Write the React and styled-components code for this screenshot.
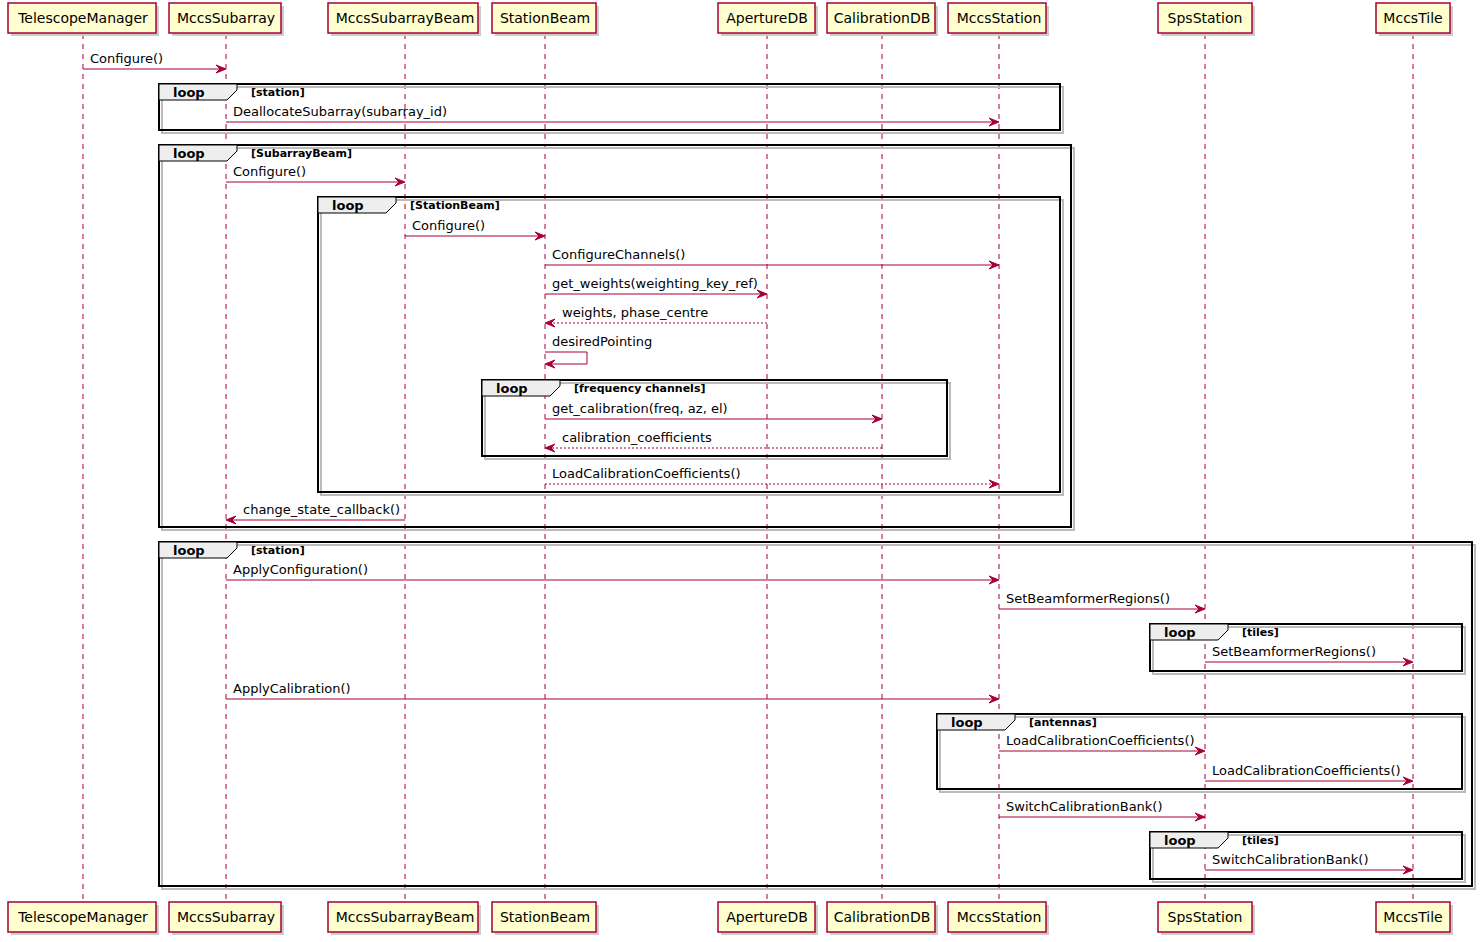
import React from 'react';
import styled, { createGlobalStyle } from 'styled-components';

const Global = createGlobalStyle`
  body { margin: 0; background: #fff; font-family: "DejaVu Sans", sans-serif; }
`;

const Canvas = styled.svg`
  display: block;
  width: 1482px;
  height: 942px;
  font-family: "DejaVu Sans", sans-serif;
`;

const RED = '#A80036';

const participants = [
  { name: 'TelescopeManager', x: 8, w: 148, cx: 83 },
  { name: 'MccsSubarray', x: 169, w: 112, cx: 226 },
  { name: 'MccsSubarrayBeam', x: 328, w: 150, cx: 405 },
  { name: 'StationBeam', x: 492, w: 104, cx: 545 },
  { name: 'ApertureDB', x: 718, w: 97, cx: 767 },
  { name: 'CalibrationDB', x: 827, w: 108, cx: 882 },
  { name: 'MccsStation', x: 948, w: 98, cx: 999 },
  { name: 'SpsStation', x: 1158, w: 94, cx: 1205 },
  { name: 'MccsTile', x: 1376, w: 74, cx: 1413 },
];
const P = Object.fromEntries(participants.map((p) => [p.name, p.cx]));

const loops = [
  { x: 159, y: 84, w: 901, h: 46, cond: '[station]' },
  { x: 159, y: 145, w: 912, h: 382, cond: '[SubarrayBeam]' },
  { x: 318, y: 197, w: 742, h: 295, cond: '[StationBeam]' },
  { x: 482, y: 380, w: 465, h: 76, cond: '[frequency channels]' },
  { x: 159, y: 542, w: 1313, h: 344, cond: '[station]' },
  { x: 1150, y: 624, w: 312, h: 47, cond: '[tiles]' },
  { x: 937, y: 714, w: 525, h: 75, cond: '[antennas]' },
  { x: 1150, y: 832, w: 312, h: 47, cond: '[tiles]' },
];

const msgs = [
  ['TelescopeManager', 'MccsSubarray', 69, 'Configure()'],
  ['MccsSubarray', 'MccsStation', 122, 'DeallocateSubarray(subarray_id)'],
  ['MccsSubarray', 'MccsSubarrayBeam', 182, 'Configure()'],
  ['MccsSubarrayBeam', 'StationBeam', 236, 'Configure()'],
  ['StationBeam', 'MccsStation', 265, 'ConfigureChannels()'],
  ['StationBeam', 'ApertureDB', 294, 'get_weights(weighting_key_ref)'],
  ['ApertureDB', 'StationBeam', 323, 'weights, phase_centre', true],
  ['StationBeam', 'CalibrationDB', 419, 'get_calibration(freq, az, el)'],
  ['CalibrationDB', 'StationBeam', 448, 'calibration_coefficients', true],
  ['StationBeam', 'MccsStation', 484, 'LoadCalibrationCoefficients()', true],
  ['MccsSubarrayBeam', 'MccsSubarray', 520, 'change_state_callback()'],
  ['MccsSubarray', 'MccsStation', 580, 'ApplyConfiguration()'],
  ['MccsStation', 'SpsStation', 609, 'SetBeamformerRegions()'],
  ['SpsStation', 'MccsTile', 662, 'SetBeamformerRegions()'],
  ['MccsSubarray', 'MccsStation', 699, 'ApplyCalibration()'],
  ['MccsStation', 'SpsStation', 751, 'LoadCalibrationCoefficients()'],
  ['SpsStation', 'MccsTile', 781, 'LoadCalibrationCoefficients()'],
  ['MccsStation', 'SpsStation', 817, 'SwitchCalibrationBank()'],
  ['SpsStation', 'MccsTile', 870, 'SwitchCalibrationBank()'],
];

const Head = ({ x, y }) => (
  <path d={`M${x},${y} l-10,-4 l4,4 l-4,4 z`} fill={RED} stroke={RED} />
);
const HeadLeft = ({ x, y }) => (
  <path d={`M${x},${y} l10,-4 l-4,4 l4,4 z`} fill={RED} stroke={RED} />
);

const Box = ({ p, y }) => (
  <g>
    <rect x={p.x + 3} y={y + 3} width={p.w} height={30} fill="#ccc" />
    <rect x={p.x} y={y} width={p.w} height={30} fill="#FEFECE" stroke={RED} strokeWidth="1.5" />
    <text x={p.cx} y={y + 20} fontSize="14" textAnchor="middle" fill="#000">{p.name}</text>
  </g>
);

const Loop = ({ l }) => (
  <g>
    <rect x={l.x + 3} y={l.y + 3} width={l.w} height={l.h} fill="none" stroke="#bbb" strokeWidth="2" />
    <rect x={l.x} y={l.y} width={l.w} height={l.h} fill="none" stroke="#000" strokeWidth="2" />
    <path d={`M${l.x},${l.y} h78 v6 l-10,10 h-68 z`} fill="#EEEEEE" stroke="#000" strokeWidth="1" />
    <text x={l.x + 14} y={l.y + 13} fontSize="13" fontWeight="bold">loop</text>
    <text x={l.x + 92} y={l.y + 12} fontSize="11" fontWeight="bold">{l.cond}</text>
  </g>
);

const Message = ({ m }) => {
  const [a, b, y, label, dashed] = m;
  const x1 = P[a];
  const x2 = P[b];
  const right = x2 > x1;
  const lx = Math.min(x1, x2) + (right ? 7 : 17);
  return (
    <g>
      <line x1={x1} y1={y} x2={right ? x2 - 2 : x2 + 2} y2={y} stroke={RED} strokeWidth="1"
        strokeDasharray={dashed ? '2,2' : undefined} />
      {right ? <Head x={x2} y={y} /> : <HeadLeft x={x2} y={y} />}
      <text x={lx} y={y - 6} fontSize="13" fill="#000">{label}</text>
    </g>
  );
};

export default function App() {
  const sb = P.StationBeam;
  return (
    <>
      <Global />
      <Canvas viewBox="0 0 1482 942">
        {participants.map((p) => (
          <line key={p.name} x1={p.cx} y1={34} x2={p.cx} y2={902} stroke={RED} strokeDasharray="5,5" />
        ))}
        {loops.map((l, i) => <Loop key={i} l={l} />)}
        {msgs.map((m, i) => <Message key={i} m={m} />)}
        <path d={`M${sb},352 H${sb + 42} V364 H${sb + 2}`} fill="none" stroke={RED} />
        <HeadLeft x={sb} y={364} />
        <text x={sb + 7} y={346} fontSize="13">desiredPointing</text>
        {participants.map((p) => <Box key={'t' + p.name} p={p} y={3} />)}
        {participants.map((p) => <Box key={'b' + p.name} p={p} y={902} />)}
      </Canvas>
    </>
  );
}
